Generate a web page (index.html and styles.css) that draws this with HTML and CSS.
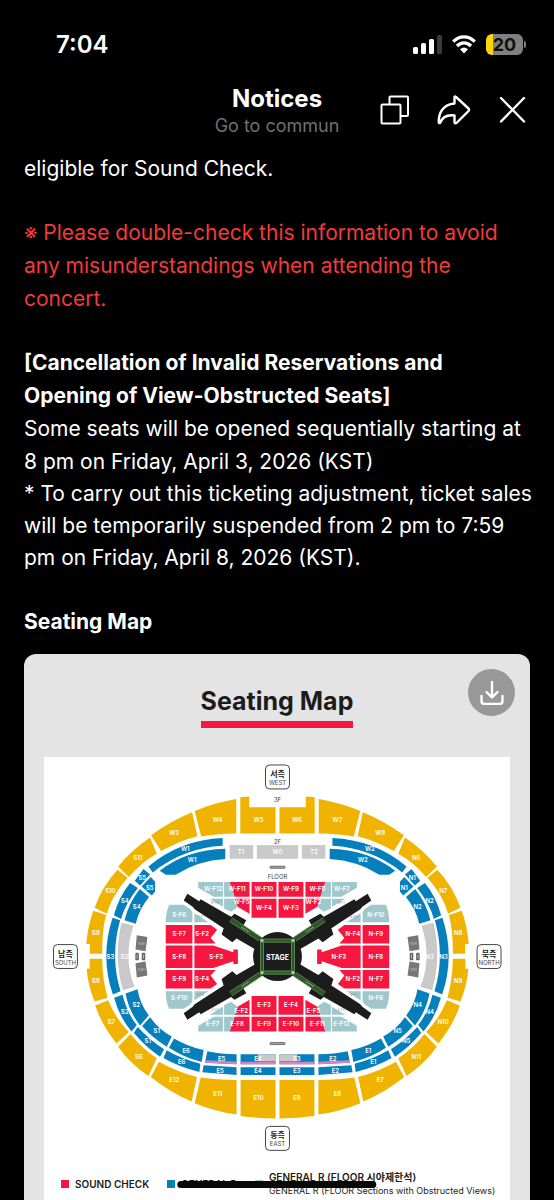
FILE: index.html
```html
<!DOCTYPE html>
<html lang="en">
<head>
<meta charset="utf-8">
<meta name="viewport" content="width=device-width, initial-scale=1">
<title>Notices</title>
<link rel="stylesheet" href="styles.css">
</head>
<body>
<div class="screen">
  <div class="status">
    <span class="status-time">7:04</span>
    <div class="status-icons">
      <svg class="signal" viewBox="0 0 29 19" aria-hidden="true">
        <rect x="0" y="12" width="5" height="7" rx="1.5" fill="#fff"/>
        <rect x="8" y="8" width="5" height="11" rx="1.5" fill="#fff"/>
        <rect x="16" y="4" width="5" height="15" rx="1.5" fill="#fff"/>
        <rect x="24" y="0" width="5" height="19" rx="1.5" fill="#3a3a3a"/>
      </svg>
      <svg class="wifi" viewBox="0 0 24 19" aria-hidden="true">
        <g fill="none" stroke="#fff" stroke-width="3.3">
          <path d="M1.2 6.6Q6 1.8 12 1.8T22.8 6.6"/>
          <path d="M5 11Q8 7.8 12 7.8T19 11"/>
        </g>
        <path d="M8 14.2Q12 10.9 16 14.2L12 18.6Z" fill="#fff"/>
      </svg>
      <div class="battery"><span class="battery-level">20</span></div>
    </div>
  </div>

  <header class="header">
    <div class="header-title">
      <h1>Notices</h1>
      <a href="#community">Go to commun</a>
    </div>
    <div class="header-actions">
      <button type="button" aria-label="Copy">
        <svg width="30" height="30" viewBox="0 0 30 30" fill="none" stroke="#fff" stroke-width="2" stroke-linejoin="round">
          <path d="M9.500 9V2.500Q9.500 1.500 10.500 1.500H27Q28 1.500 28 2.500V20Q28 21 27 21H21"/>
          <rect x="1.500" y="9.500" width="19" height="19" rx="1"/>
        </svg>
      </button>
      <button type="button" aria-label="Share">
        <svg width="34" height="30" viewBox="0 0 34 30" fill="none" stroke="#fff" stroke-width="2.400" stroke-linejoin="round">
          <path d="M17.500 8.500V2Q17.500 1 19 2L31.500 13.500Q32.500 14.800 31.500 16L19.500 28Q17.500 29 17.500 27V20.500C10 19.500 5 23 3 28Q1.800 28.500 1.800 27C1.500 18 6 9.500 17.500 8.500Z"/>
        </svg>
      </button>
      <button type="button" aria-label="Close">
        <svg width="28" height="30" viewBox="0 0 28 30" fill="none" stroke="#fff" stroke-width="2.400" stroke-linecap="round">
          <path d="M3 3L26 26.500M26 3L3 26.500"/>
        </svg>
      </button>
    </div>
  </header>

  <main class="notice">
    <p>eligible for Sound Check.</p>
    <p class="warning">※ Please double-check this information to avoid<br>any misunderstandings when attending the<br>concert.</p>
    <h2 class="joined">[Cancellation of Invalid Reservations and<br>Opening of View-Obstructed Seats]</h2>
    <p class="joined">Some seats will be opened sequentially starting at<br>8 pm on Friday, April 3, 2026 (KST)</p>
    <p class="footnote">* To carry out this ticketing adjustment, ticket sales<br>will be temporarily suspended from 2 pm to 7:59<br>pm on Friday, April 8, 2026 (KST).</p>
    <h2 class="map-heading">Seating Map</h2>

    <section class="card">
      <h3 class="card-title">Seating Map</h3>
      <button class="download" type="button" aria-label="Download seating map">
        <svg width="24" height="24" viewBox="0 0 24 24" fill="none" stroke="#fff" stroke-width="2.400" stroke-linecap="round" stroke-linejoin="round">
          <path d="M12 1V16M6.500 11L12 16.500L17.500 11M1.500 15V20Q1.500 23 4.500 23H19.500Q22.500 23 22.500 20V15"/>
        </svg>
      </button>
      <div class="sheet">
        <svg class="map" viewBox="43 757 467 398" role="img" aria-label="Seating map">
          <defs>
            <g id="tiers">
              <g class="gold">
                <path d="M239.700 797.300L248.700 796.700V807.300H275V833.700H239.700Z"/>
                <path d="M194 811Q213 803 235.700 799V833.700Q215 834 200.500 836.700Z"/>
                <path d="M150.300 835.300Q170 821 191.500 812.300L196.700 836.300Q178 841 160.300 851.300Z"/>
                <path d="M149.300 837.700L156 854Q140 863 128 877.300L117.300 866.700Q131 850 149.300 837.700Z"/>
                <path d="M116.700 870L126.700 878Q111 896 106 914L93.700 908Q101 887 116.700 870Z"/>
                <path d="M92.300 911L105.300 915.300Q101 930 101.300 954.300H89V944.300H85.300Q87 926 92.300 911Z"/>
                <path d="M88.700 959.300H101.300Q101.500 980 106.700 998.300L93.700 1002Q87 986 85.700 969.300H88.700Z"/>
                <path d="M94.300 1006L107.300 1000.700Q114 1018 128 1032.700L115.700 1044Q101 1026 94.300 1006Z"/>
                <path d="M129.700 1034.700Q141 1049 156 1059L147.700 1076.700Q129 1064 117.300 1047.300Z"/>
                <path d="M158.300 1062.300Q175 1072 196.300 1077.700L191 1102.300Q169 1093 150 1077.700Z"/>
                <path d="M200 1078.300Q216 1080.700 236 1080.700V1115.300Q215 1112.700 194 1104Z"/>
                <path d="M240 1080.700H275V1119.300Q257 1119 240 1116.700Z"/>
              </g>
              <g class="blue">
                <path d="M222 838.300V846Q183 848 152 872.700L147.700 866.700Q180 840 222 838.300Z"/>
                <path d="M224.700 849V859.300Q197 861 175 875H165L159 871Q186 850 224.700 849Z"/>
                <path d="M142.700 869.300L149.300 874.700 139.300 885.700 134 881Z"/>
                <path d="M150 877.300L154.300 882V891.700L151 895.700 140.700 886.700Z"/>
                <path d="M129.300 883.300L137 888.300Q124 905 120.300 919.300L113 915.700Q118 897 129.300 883.300Z"/>
                <path d="M139 889.300L148.300 897.300Q138 910 135 924L123.700 920.700Q128 903 139 889.300Z"/>
                <path d="M111.700 918L119.300 920.700Q109 957 119.700 991.700L112 995Q99 957 111.700 918Z"/>
                <path d="M113.300 998.300L121.700 995.300Q126 1013 136 1025.700L130.700 1032Q118 1017 113.300 998.300Z"/>
                <path d="M124.700 994L136.700 989.700Q139 1004 148 1016L139.300 1026Q128 1012 124.700 994Z"/>
                <path d="M137 1027.700Q149 1041 163.300 1050L159.300 1057.300Q144 1047 133 1033.300Z"/>
                <path d="M149.300 1017.700Q158 1030 171 1037L166 1047.300Q152 1039 141.300 1026.700Z"/>
                <path d="M166 1051Q181 1060 199.700 1064.300L198.700 1072.700Q179 1068 162.700 1058.700Z"/>
                <path d="M173.300 1039Q187 1047 203 1050.700L201 1062.700Q183 1058 168.300 1048.300Z"/>
                <path d="M206.700 1052Q220 1055 236 1055V1065L204.300 1063.300Z"/>
                <path d="M203 1066L236 1068V1075.700L201.700 1073Z"/>
                <path d="M240 1055H275V1065H240ZM240 1068H275V1075.700H240Z"/>
              </g>
              <g class="gray">
                <path d="M120.700 923L132.700 926Q122 957 133.700 987.300L122 990.700Q112.600 957 120.700 923Z"/>
                <path d="M229 845.300H252.700V859H229ZM257.300 1055H275V1062H257.300Z"/>
              </g>
              <path fill="#d982c9" d="M204.600 1061L236 1062.300V1065L204.300 1063.300ZM240 1062.300H275V1065H240Z"/>
              <path fill="#777" d="M136 935.700L146.700 937.300 144.700 951.700 134.700 950ZM134.700 963.700L144.700 962 146.700 976 136 978Z"/>
              <g fill="#666"><rect x="134.500" y="953.200" width="3.600" height="7.600" rx="1.200"/><rect x="140.900" y="953.200" width="3.600" height="7.600" rx="1.200"/></g>
              <path stroke="#ccc" stroke-width=".7" d="M136.300 955V959M142.700 955V959"/>
            </g>
            <g id="blocks">
              <g class="red">
                <path d="M251 882.300H276V897H251ZM251 899H276V918H251Z"/>
                <path d="M229 882.300H249V897H234ZM234 899H249V914L237 907Z"/>
                <path d="M165 925.300H191.700V944H165ZM193.700 925.300H210L216.500 930 210 938.500 215 944H193.700Z"/>
                <path d="M165 946H191.700V957.500H165ZM193.700 946H212.700L232.700 952.700V950H237.300V957.500H193.700Z"/>
              </g>
              <g class="teal">
                <path d="M197.500 882.300H222.300V897H213L197.500 888ZM223.500 882.300H229L234 897H223.500ZM209 899H222.300V907ZM223.500 899H234L237 907 231 912 223.500 909Z"/>
                <path d="M168.300 905H191.700V922.700H165Q165 913 168.300 905ZM193.700 907L208 917 212 922.700H193.700Z"/>
              </g>
            </g>
            <g id="arm">
              <path class="arm-margin" d="M183 900.700L186.700 894 198.500 901.500 200 899.500 230.500 917 234 914 245.700 920.700 242 927 262 940 255 949 236 939 231.700 942.700 221 935 223 928.500 194 909.500 192 907Z"/>
              <path fill="#1c1c1c" d="M183 900.700L186.700 894 198.500 901.500 200 899.500 230.500 917 234 914 245.700 920.700 242 927 262 940 255 950 236 939 231.700 942.700 221 935 223 928.500 194 909.500 192 907Z"/>
              <path stroke="#2f5428" stroke-width="4.600" d="M230 920L262 941"/>
              <path stroke="#6b9d5b" stroke-width=".7" d="M229 922L260 942.500M231.500 918L262 938.500"/>
              <path stroke="#93b787" stroke-width="1.200" stroke-dasharray="1.500 .700" d="M241 927.500L249 932.700"/>
            </g>
          </defs>

          <use href="#tiers"/>
          <use href="#tiers" transform="translate(554 0) scale(-1 1)"/>
          <rect x="256.300" y="845.300" width="41.400" height="13.700" class="gray"/>

          <use href="#blocks"/>
          <use href="#blocks" transform="translate(554 0) scale(-1 1)"/>
          <use href="#blocks" transform="translate(0 1914.400) scale(1 -1)"/>
          <use href="#blocks" transform="translate(554 1914.400) scale(-1 -1)"/>

          <circle cx="277" cy="957" r="29" fill="#fff"/>
          <use href="#arm"/>
          <use href="#arm" transform="translate(554 0) scale(-1 1)"/>
          <use href="#arm" transform="translate(0 1914.400) scale(1 -1)"/>
          <use href="#arm" transform="translate(554 1914.400) scale(-1 -1)"/>
          <circle cx="277" cy="957" r="24.500" fill="#1c1c1c"/>
          <g fill="none">
            <rect x="261.500" y="941" width="31" height="32" stroke="#2f5428" stroke-width="4"/>
            <rect x="260" y="939.500" width="34" height="35" stroke="#6b9d5b" stroke-width=".7"/>
            <rect x="263" y="942.500" width="28" height="29" stroke="#6b9d5b" stroke-width=".7"/>
          </g>
          <g fill="#bcc9b8"><circle cx="261.500" cy="941" r="1.600"/><circle cx="292.500" cy="941" r="1.600"/><circle cx="261.500" cy="973" r="1.600"/><circle cx="292.500" cy="973" r="1.600"/></g>
          <g fill="#aaa" stroke="#555" stroke-width=".8"><rect x="269.500" y="866.500" width="15" height="2" rx=".5"/><rect x="269.500" y="1043.200" width="15" height="2" rx=".5"/></g>

          <g class="gates">
            <rect x="265" y="765" width="24" height="24" rx="4"/>
            <rect x="52.500" y="945" width="24" height="24" rx="4"/>
            <rect x="477" y="945" width="24" height="24" rx="4"/>
            <rect x="265" y="1127.200" width="24" height="24" rx="4"/>
          </g>
          <g class="gate-ko">
            <text x="277" y="777">서측</text><text x="64.500" y="957">남측</text><text x="489" y="957">북측</text><text x="277" y="1139">동측</text>
          </g>
          <g class="gate-en">
            <text x="277" y="785">WEST</text><text x="64.500" y="965">SOUTH</text><text x="489" y="965">NORTH</text><text x="277" y="1147">EAST</text>
          </g>
          <g class="levels">
            <text x="277" y="802">3F</text><text x="277" y="844">2F</text><text x="277" y="879.500">FLOOR</text>
          </g>
          <text class="stage" x="277" y="960">STAGE</text>

          <g class="labels">
            <text x="258" y="822.500">W5</text><text x="217" y="822.500">W4</text><text x="173.500" y="835">W3</text><text x="137" y="860.500">S11</text><text x="109.500" y="893.500">S10</text><text x="95" y="935">S9</text><text x="95" y="983">S8</text><text x="110.500" y="1024.500">S7</text><text x="138" y="1059.500">S6</text><text x="173.500" y="1083">E12</text><text x="217" y="1097">E11</text><text x="258" y="1101">E10</text>
            <text x="296.500" y="822.500">W6</text><text x="337" y="822.500">W7</text><text x="380" y="835">W8</text><text x="416" y="860.500">N6</text><text x="443" y="893.500">N7</text><text x="458" y="935">N8</text><text x="458" y="983">N9</text><text x="443" y="1024.500">N10</text><text x="416" y="1059.500">N11</text><text x="380" y="1083">E7</text><text x="337" y="1097">E8</text><text x="296.500" y="1101">E9</text>
            <text x="184.500" y="851.500">W1</text><text x="191.500" y="862">W1</text><text x="369.500" y="851.500">W2</text><text x="362.500" y="862">W2</text>
            <text x="141.500" y="880">S5</text><text x="149" y="890">S5</text><text x="412" y="880">N1</text><text x="404" y="890">N1</text>
            <text x="124" y="903">S4</text><text x="136" y="909.500">S4</text><text x="429.500" y="903">N2</text><text x="417.500" y="909.500">N2</text>
            <text x="109.500" y="959">S3</text><text x="123.500" y="959">S3</text><text x="443.500" y="959">N3</text><text x="429.500" y="959">N3</text>
            <text x="124" y="1014.500">S2</text><text x="135.500" y="1008">S2</text><text x="429.500" y="1014.500">N4</text><text x="417.500" y="1008">N4</text>
            <text x="147" y="1044">S1</text><text x="156" y="1034">S1</text><text x="406" y="1044">N5</text><text x="397.500" y="1034">N5</text>
            <text x="181" y="1065">E6</text><text x="185.500" y="1053.500">E6</text><text x="373" y="1065">E1</text><text x="368" y="1053.500">E1</text>
            <text x="221" y="1061.500">E5</text><text x="219.500" y="1074">E5</text><text x="257.500" y="1061.500">E4</text><text x="257.500" y="1074">E4</text><text x="296.500" y="1061.500">E3</text><text x="296.500" y="1074">E3</text><text x="332.500" y="1061.500">E2</text><text x="335" y="1074">E2</text>
            <text x="240.500" y="854.500">T1</text><text x="277" y="854.500">W0</text><text x="313.500" y="854.500">T2</text>
            <text x="212.500" y="891.500">W-F12</text><text x="236.500" y="891.500">W-F11</text><text x="263.500" y="891.500">W-F10</text><text x="290.500" y="891.500">W-F9</text><text x="317" y="891.500">W-F8</text><text x="341.500" y="891.500">W-F7</text>
            <text x="241" y="904">W-F5</text><text x="263.500" y="910">W-F4</text><text x="290.500" y="910">W-F3</text><text x="313" y="904">W-F2</text>
            <text x="178.500" y="917.500">S-F6</text><text x="178.500" y="936.500">S-F7</text><text x="201.500" y="936.500">S-F2</text><text x="178.500" y="959">S-F8</text><text x="215.500" y="959">S-F3</text><text x="178.500" y="981.500">S-F9</text><text x="201.500" y="981.500">S-F4</text><text x="178.500" y="1000.500">S-F10</text>
            <text x="375.500" y="917.500">N-F10</text><text x="352.500" y="936.500">N-F4</text><text x="375.500" y="936.500">N-F9</text><text x="338.500" y="959">N-F3</text><text x="375.500" y="959">N-F8</text><text x="352.500" y="981.500">N-F2</text><text x="375.500" y="981.500">N-F7</text><text x="375.500" y="1000.500">N-F6</text>
            <text x="240.500" y="1014">E-F2</text><text x="263.500" y="1008">E-F3</text><text x="290.500" y="1008">E-F4</text><text x="313" y="1014">E-F5</text>
            <text x="212" y="1026.500">E-F7</text><text x="236.500" y="1026.500">E-F8</text><text x="263.500" y="1026.500">E-F9</text><text x="290.500" y="1026.500">E-F10</text><text x="317" y="1026.500">E-F11</text><text x="341" y="1026.500">E-F12</text>
          </g>
          <g class="minor">
            <text x="140.500" y="945">FOH</text><text x="140.500" y="971">FOH</text><text x="413.500" y="945">FOH</text><text x="413.500" y="971">FOH</text>
          </g>
          <g class="minor muted">
            <text x="214" y="904">W-F6</text><text x="341" y="904">W-F1</text><text x="200" y="918.500">S-F1</text><text x="353" y="918.500">N-F5</text><text x="200" y="997">S-F5</text><text x="353" y="997">N-F1</text><text x="214.500" y="1011.500">E-F1</text><text x="341" y="1011.500">E-F6</text>
          </g>
        </svg>

        <ul class="legend">
          <li><span class="swatch swatch-red"></span><strong>SOUND CHECK</strong></li>
          <li><span class="swatch swatch-blue"></span><strong>GENERAL R</strong></li>
          <li><span class="swatch swatch-teal"></span><div class="legend-text"><strong>GENERAL R (FLOOR 시야제한석)</strong><span>GENERAL R (FLOOR Sections with Obstructed Views)</span></div></li>
        </ul>
      </div>
    </section>
  </main>
  <div class="home-indicator"></div>
</div>
</body>
</html>
```
FILE: styles.css
```css
* {
  box-sizing: border-box;
}

body {
  margin: 0;
  background: #000;
  color: #fff;
  font-family: Inter, "Noto Sans CJK KR", sans-serif;
}

h1, h2, h3, p, ul {
  margin: 0;
  padding: 0;
}

button {
  display: flex;
  align-items: center;
  justify-content: center;
  padding: 0;
  border: 0;
  background: none;
  cursor: pointer;
}

.screen {
  display: flex;
  flex-direction: column;
  height: 100vh;
  overflow: hidden;
}

.status {
  display: flex;
  flex: none;
  align-items: center;
  justify-content: space-between;
  height: 80px;
  padding: 8px 31px 0 56px;
}

.status-time {
  font-size: 24px;
  font-weight: 600;
}

.status-icons {
  display: flex;
  align-items: center;
  gap: 10px;
}

.signal {
  width: 29px;
  height: 19px;
}

.wifi {
  width: 24px;
  height: 19px;
}

.battery {
  position: relative;
  width: 37px;
  height: 21px;
  border-radius: 6px;
  background: linear-gradient(90deg, #ffd60a 20%, #808080 20%);
  color: #111;
  font-size: 18px;
  font-weight: 700;
  line-height: 21px;
  text-align: center;
}

.battery::after {
  content: "";
  position: absolute;
  top: 7px;
  right: -3px;
  width: 2px;
  height: 7px;
  border-radius: 0 2px 2px 0;
  background: #808080;
}

.header {
  display: grid;
  flex: none;
  grid-template-columns: 1fr auto 1fr;
  height: 72px;
  padding: 0 28px;
}

.header-title {
  grid-column: 2;
  padding-top: 4px;
  text-align: center;
}

.header-title h1 {
  font-size: 24px;
  font-weight: 700;
  line-height: 30px;
}

.header-title a {
  display: block;
  color: #707070;
  font-size: 18px;
  line-height: 24px;
  text-decoration: none;
}

.header-actions {
  display: flex;
  gap: 27px;
  justify-content: flex-end;
  align-items: center;
  height: 60px;
}

.notice {
  flex: 1;
  min-height: 0;
  overflow-y: auto;
  scrollbar-width: none;
  font-size: 21px;
  line-height: 33px;
}

.notice > p,
.notice > h2 {
  margin-bottom: 31px;
  padding: 0 16px 0 24px;
}

.notice > .joined {
  margin-bottom: 0;
}

.notice > .footnote {
  line-height: 32px;
}

.notice > .map-heading {
  margin-bottom: 16px;
}

.notice h2 {
  font-size: 21px;
  font-weight: 700;
}

.warning {
  color: #f33b3b;
}

.card {
  position: relative;
  margin: 0 24px;
  padding: 28px 20px 20px;
  border-radius: 12px;
  background: #e4e4e4;
  color: #1c1c1c;
}

.card-title {
  width: fit-content;
  margin: 0 auto 29px;
  border-bottom: 7px solid #f5173f;
  font-size: 25px;
  font-weight: 700;
  line-height: 39px;
}

.download {
  position: absolute;
  top: 15px;
  right: 15px;
  width: 47px;
  height: 47px;
  border-radius: 50%;
  background: #989898;
}

.sheet {
  background: #fff;
}

.map {
  display: block;
  width: 100%;
}

.map text {
  text-anchor: middle;
}

.gold { fill: #f0b400; }
.blue { fill: #0680bd; }
.gray { fill: #c9c9c9; }
.red { fill: #f5173f; }
.teal { fill: #9fc8cd; }

.arm-margin {
  fill: #fff;
  stroke: #fff;
  stroke-width: 7px;
}

.gates {
  fill: #fff;
  stroke: #444;
  stroke-width: 1px;
}

.gate-ko {
  fill: #222;
  font-size: 8px;
  font-weight: 700;
}

.gate-en {
  fill: #444;
  font-size: 6px;
}

.levels {
  fill: #444;
  font-size: 6px;
}

.labels {
  fill: #fff;
  font-size: 6px;
  font-weight: 600;
}

.stage {
  fill: #fff;
  font-size: 7px;
  font-weight: 700;
}

.minor {
  fill: #ddd;
  font-size: 3px;
}

.muted {
  fill: #888;
}

.legend {
  display: flex;
  align-items: center;
  gap: 18px;
  padding: 16px 17px 20px;
  list-style: none;
  font-size: 10px;
  line-height: 14px;
  white-space: nowrap;
}

.legend li {
  display: flex;
  align-items: center;
  gap: 6px;
}

.legend strong {
  font-weight: 600;
}

.legend-text {
  display: flex;
  flex-direction: column;
}

.legend-text span {
  font-size: 9px;
}

.swatch {
  flex: none;
  width: 8px;
  height: 8px;
}

.swatch-red { background: #f5173f; }
.swatch-blue { background: #0680bd; }
.swatch-teal { background: #9fc8cd; }

.home-indicator {
  position: fixed;
  bottom: 12px;
  left: 50%;
  width: 36%;
  height: 7px;
  border-radius: 4px;
  background: #080808;
  transform: translateX(-50%);
}
```
